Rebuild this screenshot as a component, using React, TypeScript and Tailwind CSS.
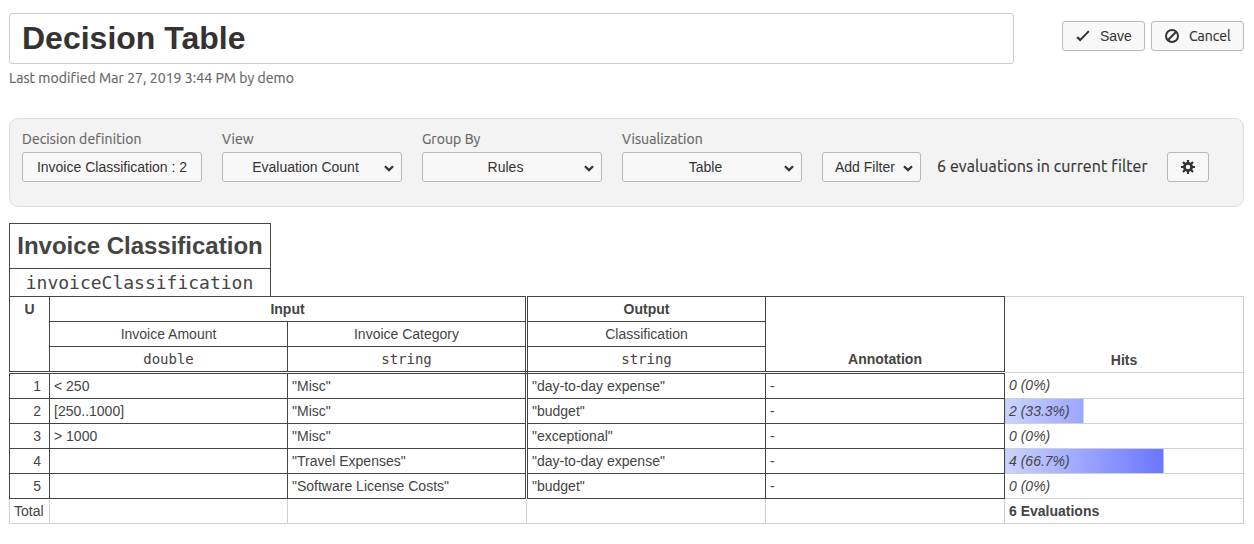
import React from "react";

const ubuntu = "font-['Ubuntu','Noto_Sans',sans-serif] [-webkit-text-stroke:0.2px]";

const cell = "border border-[#444] px-1 py-0 leading-[20px] align-middle";
const head = "border border-[#444] px-1 py-0 text-center leading-[20px] align-middle";
const light = "border border-[#d0d0d0] px-1 py-0 leading-[20px]";
const monoHead = "border border-[#444] px-1 pb-px font-['DejaVu_Sans_Mono',monospace] font-normal text-center leading-[20px]";

const rows = [
  { input: "< 250", category: '"Misc"', output: '"day-to-day expense"', hits: 0, percent: 0 },
  { input: "[250..1000]", category: '"Misc"', output: '"budget"', hits: 2, percent: 33.3 },
  { input: "> 1000", category: '"Misc"', output: '"exceptional"', hits: 0, percent: 0 },
  { input: "", category: '"Travel Expenses"', output: '"day-to-day expense"', hits: 4, percent: 66.7 },
  { input: "", category: '"Software License Costs"', output: '"budget"', hits: 0, percent: 0 },
];

function barStyle(percent: number): React.CSSProperties {
  if (percent === 0) return {};
  const edge = `${Math.floor(percent * 2.39) - 0.6}px`;
  return {
    backgroundImage: `linear-gradient(to right, transparent ${edge}, white ${edge}), linear-gradient(to right, #cbd3ff, #3848ff)`,
  };
}

function Chevron() {
  return (
    <svg width="10" height="7" viewBox="0 0 10 7" fill="none" stroke="#333" strokeWidth="2.2">
      <path d="M1 1.2 5 5.1 9 1.2" />
    </svg>
  );
}

function CheckIcon() {
  return (
    <svg width="14" height="12" viewBox="0 0 14 12" fill="#333">
      <path d="M.3 7.7 1.9 6.3 4.3 8.5 12.2 .6 13.5 1.7 4.2 11.6Z" />
    </svg>
  );
}

function StopIcon() {
  return (
    <svg width="14" height="14" viewBox="0 0 14 14" fill="none" stroke="#333" strokeWidth="2">
      <circle cx="7" cy="7" r="6" />
      <path d="M2.8 11.2 11.2 2.8" />
    </svg>
  );
}

function GearIcon() {
  return (
    <svg width="14" height="14" viewBox="0 0 14 14" fill="none" stroke="#333">
      <circle cx="7" cy="7" r="3.6" strokeWidth="2.8" />
      <path strokeWidth="2.2" d="M7 0V3M7 11V14M0 7H3M11 7H14M2 2 4.2 4.2M9.8 9.8 12 12M12 2 9.8 4.2M4.2 9.8 2 12" />
    </svg>
  );
}

const button = "h-[30px] rounded-[3px] border border-[#b9b9b9] bg-[#f8f8f8] text-[14px] leading-[20px] text-[#333]";

function Field({ label, children }: { label: string; children: React.ReactNode }) {
  return (
    <div className="w-[180px]">
      <div className={`${ubuntu} h-[20px] whitespace-nowrap text-[14px] leading-[20px] tracking-[0.08px] text-[#666]`}>{label}</div>
      <div className="mt-[3px]">{children}</div>
    </div>
  );
}

function Select({ value }: { value: string }) {
  return (
    <button className={`${button} flex w-full items-center pr-[7px] pl-1`}>
      <span className="flex-1 text-center">{value}</span>
      <span className="mt-[3px]">
        <Chevron />
      </span>
    </button>
  );
}

export default function App() {
  return (
    <div className="h-[544px] w-[1254px] overflow-hidden bg-white pt-[13px] pl-[9px] font-['Liberation_Sans',Arial,sans-serif] text-[14px] text-[#444]">
      <header className="flex w-[1235px] items-start">
        <h1 className="h-[51px] w-[1005px] rounded-[3px] border border-[#cdcdcd] pl-[12px] text-[32px] leading-[49px] font-bold text-[#333]">
          Decision Table
        </h1>
        <div className="mt-[8px] ml-auto flex gap-[6px]">
          <button className={`${button} flex w-[83px] items-center pl-[13px]`}>
            <CheckIcon />
            <span className="ml-[10px]">Save</span>
          </button>
          <button className={`${button} flex w-[93px] items-center pl-[13px]`}>
            <StopIcon />
            <span className={`${ubuntu} ml-[10px]`}>Cancel</span>
          </button>
        </div>
      </header>
      <p className={`${ubuntu} mt-[4px] h-[20px] leading-[20px] tracking-[0.05px] text-[#666]`}>
        Last modified Mar 27, 2019 3:44 PM by demo
      </p>

      <section className="mt-[30px] flex h-[89px] w-[1235px] gap-[20px] rounded-[9px] border border-[#dedede] bg-[#f3f3f3] pt-[10px] pl-[12px]">
        <Field label="Decision definition">
          <button className={`${button} w-full text-center`}>Invoice Classification : 2</button>
        </Field>
        <Field label="View">
          <Select value="Evaluation Count" />
        </Field>
        <Field label="Group By">
          <Select value="Rules" />
        </Field>
        <Field label="Visualization">
          <Select value="Table" />
        </Field>
        <div className="mt-[23px] flex h-[30px] items-center">
          <button className={`${button} flex w-[99px] items-center pl-[12px]`}>
            <span>Add Filter</span>
            <span className="mt-[3px] ml-[8px]">
              <Chevron />
            </span>
          </button>
          <span className={`${ubuntu} ml-[16px] w-[230px] pb-[2px] text-[16px] leading-[28px] tracking-[0.1px] whitespace-nowrap text-[#333]`}>
            6 evaluations in current filter
          </span>
          <button className={`${button} flex w-[42px] items-center justify-center`}>
            <GearIcon />
          </button>
        </div>
      </section>

      <div className="mt-[16px] h-[73px] w-[262px] border border-b-0 border-[#444] text-center">
        <h2 className="h-[45px] border-b border-[#444] text-[24px] leading-[43px] font-bold whitespace-nowrap">Invoice Classification</h2>
        <div className="pr-px font-['DejaVu_Sans_Mono',monospace] text-[18px] leading-[28px]">invoiceClassification</div>
      </div>

      <table className="w-[1235px] table-fixed border-collapse">
        <colgroup>
          <col className="w-[40px]" />
          <col className="w-[238px]" />
          <col className="w-[239px]" />
          <col className="w-[239px]" />
          <col className="w-[239px]" />
          <col className="w-[239px]" />
        </colgroup>
        <thead>
          <tr className="h-[25px]">
            <th rowSpan={3} className="border border-b-3 border-[#444] [border-bottom-style:double] p-0 pt-[2px] align-top leading-[20px]">U</th>
            <th colSpan={2} className={`${head} border-r-3 [border-right-style:double]`}>Input</th>
            <th className={head}>Output</th>
            <th rowSpan={3} className="border border-b-3 border-[#444] [border-bottom-style:double] p-0 pb-[2px] align-bottom leading-[20px]">Annotation</th>
            <th rowSpan={3} className="border border-l-0 border-[#d0d0d0] p-0 pb-[2px] align-bottom leading-[20px]">Hits</th>
          </tr>
          <tr className="h-[25px]">
            <td className={head}>Invoice Amount</td>
            <td className={`${head} border-r-3 [border-right-style:double]`}>Invoice Category</td>
            <td className={head}>Classification</td>
          </tr>
          <tr className="h-[26px]">
            <td className={`${monoHead} border-b-3 [border-bottom-style:double]`}>double</td>
            <td className={`${monoHead} border-r-3 border-b-3 [border-right-style:double] [border-bottom-style:double]`}>string</td>
            <td className={`${monoHead} border-b-3 [border-bottom-style:double]`}>string</td>
          </tr>
        </thead>
        <tbody>
          {rows.map((row, i) => (
            <tr key={i} className={i === 0 ? "h-[26px]" : "h-[25px]"}>
              <td className="border border-[#444] py-0 pr-2 pl-0 text-right leading-[20px]">{i + 1}</td>
              <td className={cell}>{row.input}</td>
              <td className={`${cell} border-r-3 [border-right-style:double]`}>{row.category}</td>
              <td className={cell}>{row.output}</td>
              <td className={cell}>-</td>
              <td
                className={`border border-l-0 border-[#d0d0d0] px-1 leading-[20px] italic ${i === 0 ? "pt-0 pb-[2px]" : "py-0"}`}
                style={barStyle(row.percent)}
              >
                {row.hits} ({row.percent}%)
              </td>
            </tr>
          ))}
          <tr className="h-[25px]">
            <td className={`${light} border-t-0`}>Total</td>
            <td className={`${light} border-t-0`} />
            <td className={`${light} border-t-0`} />
            <td className={`${light} border-t-0`} />
            <td className={`${light} border-t-0`} />
            <td className={`${light} font-bold`}>6 Evaluations</td>
          </tr>
        </tbody>
      </table>
    </div>
  );
}
